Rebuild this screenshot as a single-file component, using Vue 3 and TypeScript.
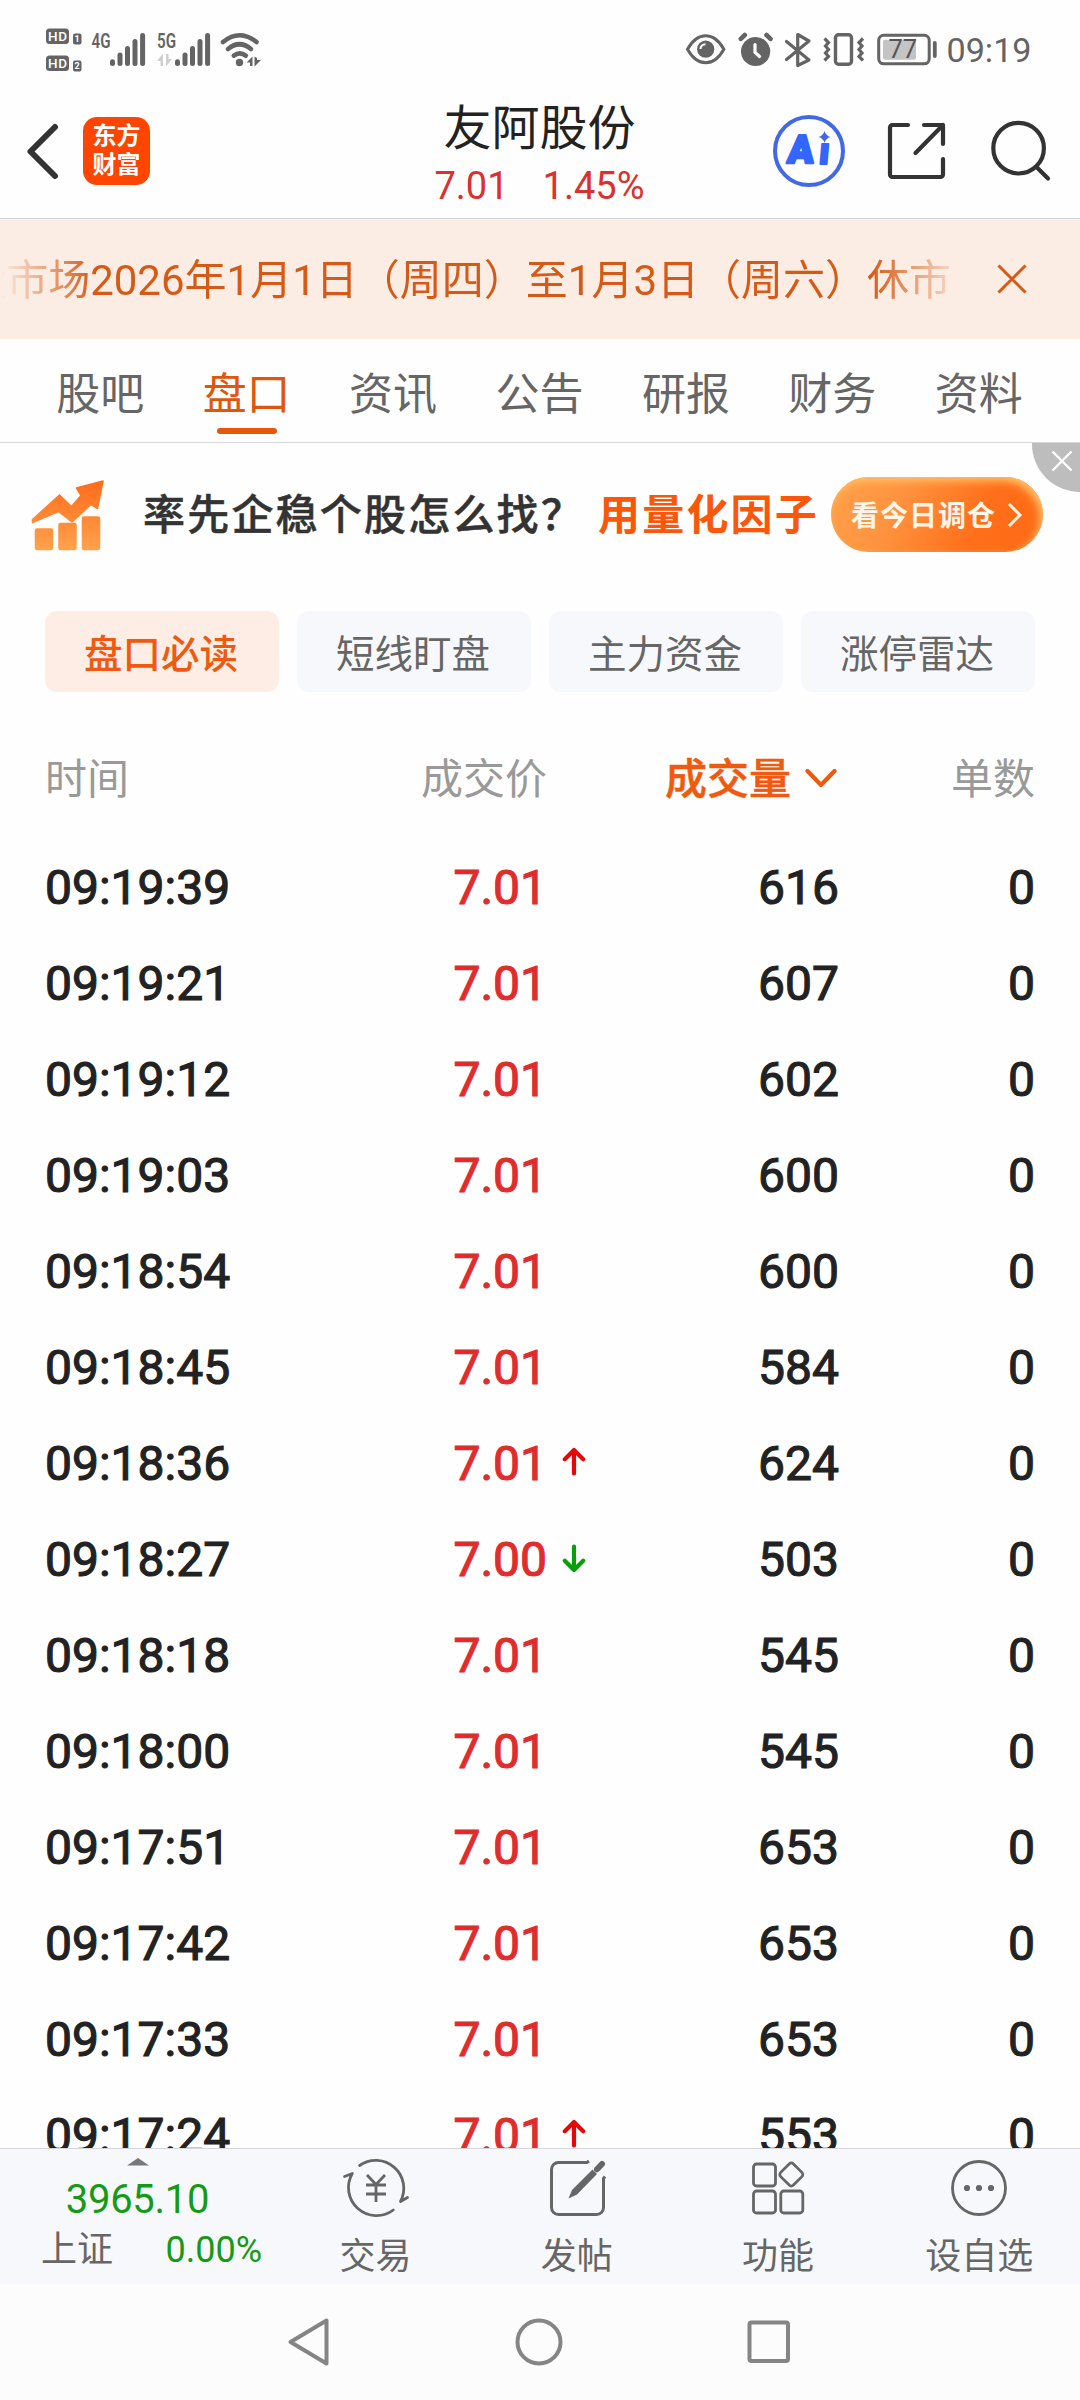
<script setup lang="ts">
import { ref } from 'vue'

interface Tick {
  time: string
  price: string
  volume: number
  orders: number
  trend?: 'up' | 'down'
}

const tabs: string[] = ['股吧', '盘口', '资讯', '公告', '研报', '财务', '资料']
const activeTab = ref<number>(1)

const chips: string[] = ['盘口必读', '短线盯盘', '主力资金', '涨停雷达']
const activeChip = ref<number>(0)

const ticks: Tick[] = [
  { time: '09:19:39', price: '7.01', volume: 616, orders: 0 },
  { time: '09:19:21', price: '7.01', volume: 607, orders: 0 },
  { time: '09:19:12', price: '7.01', volume: 602, orders: 0 },
  { time: '09:19:03', price: '7.01', volume: 600, orders: 0 },
  { time: '09:18:54', price: '7.01', volume: 600, orders: 0 },
  { time: '09:18:45', price: '7.01', volume: 584, orders: 0 },
  { time: '09:18:36', price: '7.01', volume: 624, orders: 0, trend: 'up' },
  { time: '09:18:27', price: '7.00', volume: 503, orders: 0, trend: 'down' },
  { time: '09:18:18', price: '7.01', volume: 545, orders: 0 },
  { time: '09:18:00', price: '7.01', volume: 545, orders: 0 },
  { time: '09:17:51', price: '7.01', volume: 653, orders: 0 },
  { time: '09:17:42', price: '7.01', volume: 653, orders: 0 },
  { time: '09:17:33', price: '7.01', volume: 653, orders: 0 },
  { time: '09:17:24', price: '7.01', volume: 553, orders: 0, trend: 'up' },
]
</script>

<template>
  <div class="screen">
    <!-- system status bar -->
    <div class="status">
      <svg class="status-left" width="220" height="50" viewBox="44 24 220 50" fill="#646464">
        <rect x="46" y="28.5" width="23" height="15.5" rx="3.5" />
        <text x="57.5" y="41" font-size="13.5" font-weight="500" fill="#fff" text-anchor="middle" textLength="19">HD</text>
        <rect x="73" y="33.5" width="8.5" height="11" rx="2" />
        <text x="77.2" y="42.2" font-size="9" font-weight="700" fill="#fff" text-anchor="middle">1</text>
        <rect x="46" y="55.5" width="23" height="15.5" rx="3.5" />
        <text x="57.5" y="68" font-size="13.5" font-weight="500" fill="#fff" text-anchor="middle" textLength="19">HD</text>
        <rect x="73" y="60.5" width="8.5" height="11" rx="2" />
        <text x="77.2" y="69.3" font-size="9" font-weight="700" fill="#fff" text-anchor="middle">2</text>
        <text x="91.5" y="47.8" font-size="20" font-weight="600" textLength="19" lengthAdjust="spacingAndGlyphs">4G</text>
        <text x="157" y="47.8" font-size="20" font-weight="600" textLength="19" lengthAdjust="spacingAndGlyphs">5G</text>
        <g stroke="#646464" stroke-width="5" stroke-linecap="round">
          <path d="M112.5 61.7v1.8M120 55v8.5M127.5 48.5v15M135 41.5v22M142.6 35.5v28" />
          <path d="M177.5 61.7v1.8M185 55v8.5M192.5 48.5v15M200 41.5v22M207.6 35.5v28" />
        </g>
        <path fill="#cfcfcf" d="M157 61l6-7.500v12.500h-2.500v-5zM166 54h2.500v5h3.500l-6 7.500z" />
        <g fill="none" stroke="#646464" stroke-width="4.600" stroke-linecap="round">
          <path d="M223 42q16.500-13.500 33.500 0" />
          <path d="M228 49q11.500-9.500 23 0" />
          <path d="M233.800 55.700q6-4.500 12 0" />
        </g>
        <circle cx="239.500" cy="62.500" r="3.700" />
        <path d="M246.500 62.500l6-6v9.500h-2.500v-3.500zM254.500 56.500l2.500 1.500v2h4l-6.500 6.500z" />
      </svg>
      <svg class="status-right" width="352" height="50" viewBox="682 24 352 50" fill="none" stroke="#646464">
        <path d="M687.500 49.200q7.500-13.500 18.200-13.500t18.200 13.500q-7.500 13.500-18.200 13.500t-18.200-13.500z" stroke-width="3" />
        <circle cx="705.700" cy="49.200" r="8.600" fill="#646464" stroke="none" />
        <path d="M700.500 49a5 5 0 0 1 5-4.800" stroke="#fff" stroke-width="2" />
        <circle cx="755.600" cy="51.500" r="14.600" fill="#646464" stroke="none" />
        <path d="M755 44.500v7.800l4.500 4.200" stroke="#fff" stroke-width="3.200" stroke-linecap="round" />
        <path d="M740.800 38.800l4-3.800M770.500 38.800l-4-3.800" stroke-width="4.600" stroke-linecap="round" />
        <path d="M786.500 41.500l22.500 18.500-11.300 5.500v-31l11.300 6.500-22.500 18.500" stroke-width="3.200" stroke-linejoin="round" stroke-linecap="round" />
        <rect x="835.500" y="34.700" width="16" height="29.500" rx="3" stroke-width="3.400" />
        <path d="M824.500 38.500l4 4-3 3.500 3 3.500-3 3.500 3 3.500-4 4M863 38.500l-4 4 3 3.500-3 3.500 3 3.500-3 3.500 4 4" stroke-width="3.200" />
        <rect x="878.700" y="35.300" width="50.500" height="28.500" rx="5" stroke-width="3" />
        <rect x="883" y="39.700" width="33" height="20" rx="2" fill="#c4c4c4" stroke="none" />
        <path d="M934.800 43v13" stroke-width="3.800" stroke-linecap="round" />
        <text x="902.800" y="58.200" font-size="25.500" fill="#555" stroke="none" text-anchor="middle">77</text>
        <text x="946.500" y="62" font-size="34" fill="#646464" stroke="none" textLength="85" lengthAdjust="spacingAndGlyphs">09:19</text>
      </svg>
    </div>

    <!-- stock header -->
    <header class="header">
      <div class="header-left">
        <svg class="back" width="36" height="60" viewBox="0 0 36 60" fill="none" stroke="#333" stroke-width="6" stroke-linecap="round" stroke-linejoin="round">
          <path d="M31 6L6.500 30.500 31 55" />
        </svg>
        <div class="logo"><span>东方</span><span>财富</span></div>
      </div>
      <div class="title">
        <div class="name">友阿股份</div>
        <div class="quote"><span>7.01</span><span>1.45%</span></div>
      </div>
      <div class="header-right">
        <svg width="74" height="74" viewBox="0 0 74 74">
          <circle cx="37" cy="37" r="34" fill="none" stroke="#4169e6" stroke-width="4" />
          <g fill="#3366ff" stroke="#3366ff" stroke-linejoin="round" font-weight="900">
            <text x="15" y="49" font-size="39" stroke-width="2.600" textLength="26" lengthAdjust="spacingAndGlyphs" transform="translate(4 0) skewX(-5)">A</text>
            <text x="46" y="50.500" font-size="38" stroke-width="1.800" transform="translate(4.500 0) skewX(-5)">ı</text>
          </g>
          <path d="M52.500 17q1.300 4.700 6 6-4.700 1.300-6 6-1.300-4.700-6-6 4.700-1.300 6-6z" fill="#4169e6" />
        </svg>
        <svg width="60" height="60" viewBox="0 0 60 60" fill="none" stroke="#333" stroke-width="4.200" stroke-linecap="round" stroke-linejoin="round">
          <path d="M21 4H5.500a2.500 2.500 0 0 0-2.500 2.500v47A2.500 2.500 0 0 0 5.500 56h48a2.500 2.500 0 0 0 2.500-2.500V38" />
          <path d="M37 4h19v19M56 4L28.500 32" />
        </svg>
        <svg width="62" height="62" viewBox="0 0 62 62" fill="none" stroke="#333" stroke-width="4.200" stroke-linecap="round">
          <circle cx="28.600" cy="28.200" r="25.300" />
          <path d="M46.500 47L58 58.500" />
        </svg>
      </div>
    </header>

    <!-- scrolling notice -->
    <div class="notice">
      <div class="marquee"><span>股市场2026年1月1日（周四）至1月3日（周六）休市</span></div>
      <svg width="30" height="30" viewBox="0 0 30 30" stroke="#d65a16" stroke-width="3"><path d="M1.500 1.500l27 27M28.500 1.500l-27 27" /></svg>
    </div>

    <nav class="tabs">
      <div v-for="(t, i) in tabs" :key="t" class="tab" :class="{ active: i === activeTab }" @click="activeTab = i">{{ t }}</div>
    </nav>

    <!-- promotion strip -->
    <section class="promo">
      <svg class="chart" width="74" height="72" viewBox="0 0 74 72">
        <defs>
          <linearGradient id="chartFill" gradientUnits="userSpaceOnUse" x1="0" y1="0" x2="0" y2="72">
            <stop offset="0" stop-color="#ff6a1a" />
            <stop offset="1" stop-color="#ffa34d" />
          </linearGradient>
        </defs>
        <g fill="url(#chartFill)" stroke="url(#chartFill)" stroke-width="1.500" stroke-linejoin="round">
          <path d="M1.500 43.500V40.500L28.500 16 40.500 27.500 50 16.500 45.500 9 72 2 66.500 29.500 60 25.500 41 43 27.500 32.500z" />
          <rect x="4.500" y="50" width="17" height="20.500" rx="1.500" />
          <rect x="28" y="44.500" width="17" height="26" rx="1.500" />
          <rect x="51.500" y="38" width="17" height="32.500" rx="1.500" />
        </g>
      </svg>
      <div class="promo-q">率先企稳个股怎么找？</div>
      <div class="promo-a">用量化因子</div>
      <div class="promo-btn">
        <span>看今日调仓</span>
        <svg width="16" height="26" viewBox="0 0 16 26" fill="none" stroke="#fff3e0" stroke-width="3"><path d="M2 2l11 11L2 24" /></svg>
      </div>
      <div class="promo-close">
        <svg width="22" height="22" viewBox="0 0 22 22" stroke="#fff" stroke-width="2.400"><path d="M1.500 1.500l19 19M20.500 1.500l-19 19" /></svg>
      </div>
    </section>

    <div class="chips">
      <div v-for="(c, i) in chips" :key="c" class="chip" :class="{ active: i === activeChip }" @click="activeChip = i">{{ c }}</div>
    </div>

    <!-- trade table -->
    <div class="row head">
      <div class="c-time">时间</div>
      <div class="c-price">成交价</div>
      <div class="c-mark"></div>
      <div class="c-vol sorted">
        成交量
        <svg width="32" height="20" viewBox="0 0 32 20" fill="none" stroke="#f05a0e" stroke-width="4.200" stroke-linecap="round" stroke-linejoin="round"><path d="M2.500 2L16 16 29.500 2" /></svg>
      </div>
      <div class="c-num">单数</div>
    </div>
    <main class="list">
      <div v-for="r in ticks" :key="r.time" class="row">
        <div class="c-time">{{ r.time }}</div>
        <div class="c-price">{{ r.price }}</div>
        <div class="c-mark">
          <svg v-if="r.trend" :class="r.trend" width="24" height="30" viewBox="0 0 24 30" fill="none" stroke-width="4.200" stroke-linecap="round" stroke-linejoin="round">
            <path d="M12 26.500V3M2.800 12.200L12 3l9.200 9.200" />
          </svg>
        </div>
        <div class="c-vol">{{ r.volume }}</div>
        <div class="c-num">{{ r.orders }}</div>
      </div>
    </main>

    <!-- bottom toolbar -->
    <footer class="toolbar">
      <div class="index">
        <svg width="22" height="8" viewBox="0 0 22 8"><path d="M0 7.500L11 0l11 7.500z" fill="#77777c" /></svg>
        <div class="index-value">3965.10</div>
        <div class="index-line"><span>上证</span><span class="green">0.00%</span></div>
      </div>
      <div class="tool">
        <svg width="68" height="62" viewBox="0 0 68 62" fill="none" stroke="#666" stroke-width="2.800" stroke-linecap="round" stroke-linejoin="round">
          <path d="M17.600 8.500A28 28 0 0 1 58.500 44.500L65.500 40.500" />
          <path d="M51.300 53A28 28 0 0 1 10.300 16.500L2.500 19.500" />
          <path d="M25 18L34 27.500 43 18M34 27.500v17.500M24 28h20M24 37h20" stroke-linecap="butt" />
        </svg>
        <span>交易</span>
      </div>
      <div class="tool">
        <svg width="68" height="62" viewBox="0 0 68 62" fill="none" stroke="#666" stroke-width="3">
          <path d="M46 4l-2 1.500H15.500a7 7 0 0 0-7 7v38a7 7 0 0 0 7 7h38a7 7 0 0 0 7-7V21.500l1.500-2" />
          <path d="M59 7L54 12.300" stroke-width="6" stroke-linecap="round" />
          <path d="M49.500 12.500l4.500 4.500-20 20.500-8.500 4 3.500-8.500z" fill="#666" stroke="none" />
        </svg>
        <span>发帖</span>
      </div>
      <div class="tool">
        <svg width="68" height="62" viewBox="0 0 68 62" fill="none" stroke="#666" stroke-width="2.800">
          <rect x="9.500" y="7" width="22" height="22" rx="3" />
          <rect x="9.500" y="34" width="22" height="22" rx="3" />
          <rect x="36.800" y="34" width="22" height="22" rx="3" />
          <rect x="38.300" y="8.500" width="18" height="18" rx="3" transform="rotate(45 47.300 17.500)" />
        </svg>
        <span>功能</span>
      </div>
      <div class="tool">
        <svg width="68" height="62" viewBox="0 0 68 62" fill="none" stroke="#666" stroke-width="2.800">
          <circle cx="34" cy="31" r="26.500" />
          <g fill="#666" stroke="none"><circle cx="22" cy="31" r="3.100" /><circle cx="34" cy="31" r="3.100" /><circle cx="46" cy="31" r="3.100" /></g>
        </svg>
        <span>设自选</span>
      </div>
    </footer>

    <div class="sysnav">
      <svg width="48" height="52" viewBox="0 0 48 52" fill="none" stroke="#858585" stroke-width="4" stroke-linejoin="round"><path d="M41.500 4.500v43L5.500 26z" /></svg>
      <svg width="52" height="52" viewBox="0 0 52 52" fill="none" stroke="#858585" stroke-width="4"><circle cx="26" cy="26" r="21.500" /></svg>
      <svg width="48" height="52" viewBox="0 0 48 52" fill="none" stroke="#858585" stroke-width="4"><rect x="4.500" y="6.500" width="38.500" height="38.500" rx="2" /></svg>
    </div>
  </div>
</template>

<style>
body {
  margin: 0;
  background: #fdfdfd;
}
</style>

<style scoped>
.screen {
  width: 1080px;
  height: 2400px;
  display: flex;
  flex-direction: column;
  overflow: hidden;
  background: #fefefe;
  color: #222;
  font-family: Roboto, 'Noto Sans CJK SC', sans-serif;
}
.screen * {
  box-sizing: border-box;
}
svg {
  display: block;
  flex: none;
}
.status {
  flex: none;
  height: 90px;
  padding: 24px 46px 0 44px;
  display: flex;
  justify-content: space-between;
}
.header {
  flex: none;
  height: 129px;
  border-bottom: 1px solid #d6d6da;
  display: flex;
  align-items: flex-start;
}
.header-left {
  width: 340px;
  padding: 27px 0 0 24px;
  display: flex;
  gap: 23px;
}
.back {
  margin-top: 4px;
}
.logo {
  width: 67px;
  height: 68px;
  border-radius: 14px;
  background: #ff4500;
  color: #fff;
  font-size: 24px;
  font-weight: 700;
  line-height: 29px;
  display: flex;
  flex-direction: column;
  align-items: center;
  padding-top: 5px;
}
.title {
  width: 400px;
  text-align: center;
}
.name {
  padding-top: 9px;
  font-size: 48px;
  line-height: 60px;
  text-indent: -1px;
}
.quote {
  display: flex;
  justify-content: center;
  gap: 34px;
  margin-top: 2px;
  padding-right: 1px;
  font-size: 38px;
  line-height: 50px;
  color: #dc3030;
}
.header-right {
  padding: 24px 0 0 32px;
  display: flex;
  gap: 40px;
}
.header-right svg:nth-child(2) {
  margin: 7px 0 0 1px;
}
.header-right svg:nth-child(3) {
  margin: 6px 0 0 3px;
}
.notice {
  flex: none;
  height: 120px;
  background: #fcede4;
  display: flex;
  align-items: center;
  color: #d65a16;
}
.marquee {
  width: 951px;
  height: 60px;
  margin-right: 46px;
  padding-top: 2px;
  display: flex;
  justify-content: flex-end;
  overflow: hidden;
  white-space: nowrap;
  font-size: 42px;
  line-height: 60px;
  -webkit-mask-image: linear-gradient(90deg, transparent 0, #000 95px, #000 870px, transparent 965px);
  mask-image: linear-gradient(90deg, transparent 0, #000 95px, #000 870px, transparent 965px);
}
.marquee span {
  flex: none;
}
.tabs {
  flex: none;
  height: 104px;
  padding: 0 28px 0 27px;
  display: flex;
  border-bottom: 1px solid #d6d6da;
}
.tab {
  flex: 1;
  display: flex;
  flex-direction: column;
  align-items: center;
  padding-top: 26px;
  font-size: 44px;
  line-height: 60px;
  color: #666;
}
.tab.active {
  color: #e0570c;
}
.tab.active::after {
  content: '';
  width: 60px;
  height: 6px;
  margin-top: 3px;
  border-radius: 3px;
  background: #e5570b;
}
.promo {
  flex: none;
  position: relative;
  height: 168px;
  padding: 34px 37px 0 31px;
  display: flex;
  align-items: flex-start;
  white-space: nowrap;
}
.chart {
  margin-top: 2px;
}
.promo-q,
.promo-a {
  padding-top: 9px;
  font-size: 42px;
  letter-spacing: 2.200px;
  line-height: 60px;
  font-weight: 500;
  color: #333;
}
.promo-q {
  width: 455px;
  margin-left: 38px;
  -webkit-text-stroke: 0.5px #333;
}
.promo-a {
  width: 233px;
  color: #fa570a;
  font-weight: 700;
}
.promo-btn {
  width: 212px;
  height: 75px;
  border-radius: 38px;
  display: flex;
  align-items: center;
  padding-left: 20px;
  gap: 11px;
  color: #fff5e8;
  font-size: 28px;
  font-weight: 700;
  letter-spacing: 1px;
  background: linear-gradient(115deg, #ffa04a 0%, #ff9440 30%, #ff6e19 70%, #ff6a14 100%);
  box-shadow: inset -3px 4px 8px #ffc36b;
}
.promo-btn span {
  padding-bottom: 2px;
}
.promo-close {
  position: absolute;
  top: 0;
  right: 0;
  width: 48px;
  height: 49px;
  padding: 7px 0 0 19px;
  border-bottom-left-radius: 48px;
  background: #bdbdbd;
}
.chips {
  flex: none;
  display: flex;
  gap: 18px;
  padding: 0 45px;
}
.chip {
  flex: 1;
  height: 81px;
  padding: 6px 2px 0 0;
  border-radius: 12px;
  background: #f7f8fb;
  color: #666;
  text-align: center;
  font-size: 38.500px;
  line-height: 76px;
}
.chip.active {
  background: #feede5;
  color: #ef5a10;
  font-weight: 500;
}
.row {
  flex: none;
  height: 96px;
  padding: 2px 45px 0;
  display: flex;
  align-items: center;
  font-size: 48px;
  line-height: 60px;
}
.list .row {
  -webkit-text-stroke: 1.1px currentColor;
}
.row.head {
  height: 117px;
  margin-top: 30px;
  padding-top: 28px;
  align-items: flex-start;
  font-size: 42px;
  color: #999;
}
.c-time {
  width: 300px;
}
.c-price {
  width: 202px;
  text-align: right;
  color: #e02c2c;
}
.head .c-price {
  color: #999;
}
.c-mark {
  width: 50px;
  padding-left: 15px;
}
.c-mark svg {
  margin-top: -5px;
}
.c-mark .up {
  stroke: #e00a0a;
}
.c-mark .down {
  stroke: #08a008;
  transform: rotate(180deg);
}
.c-vol {
  width: 242px;
  text-align: right;
}
.c-vol.sorted {
  display: flex;
  justify-content: flex-end;
  align-items: center;
  gap: 14px;
  padding-right: 2px;
  font-weight: 500;
  color: #f05a0e;
  -webkit-text-stroke: 0.5px #f05a0e;
}
.c-vol.sorted svg {
  margin-top: -3px;
}
.c-num {
  flex: 1;
  text-align: right;
}
.list {
  flex: 1;
  min-height: 0;
  overflow: hidden;
  display: flex;
  flex-direction: column;
}
.toolbar {
  flex: none;
  height: 136px;
  display: flex;
  background: #f7f8fb;
  border-top: 1px solid #d6d6da;
  color: #666;
  font-size: 36px;
}
.index {
  width: 275px;
  padding-top: 9px;
  display: flex;
  flex-direction: column;
  align-items: center;
}
.index-value {
  margin-top: 10px;
  font-size: 40px;
  line-height: 48px;
  letter-spacing: -0.300px;
  color: #159a15;
}
.index-line {
  align-self: stretch;
  display: flex;
  justify-content: space-between;
  padding: 0 13px 0 41px;
  margin-top: 4px;
  line-height: 44px;
}
.green {
  color: #159a15;
}
.tool {
  flex: 1;
  display: flex;
  flex-direction: column;
  align-items: center;
  padding-top: 8px;
}
.tool span {
  margin-top: 16px;
  line-height: 44px;
}
.sysnav {
  flex: none;
  height: 116px;
  background: #fcfcfc;
  padding: 32px 287px 0 285px;
  display: flex;
  justify-content: space-between;
}
</style>
